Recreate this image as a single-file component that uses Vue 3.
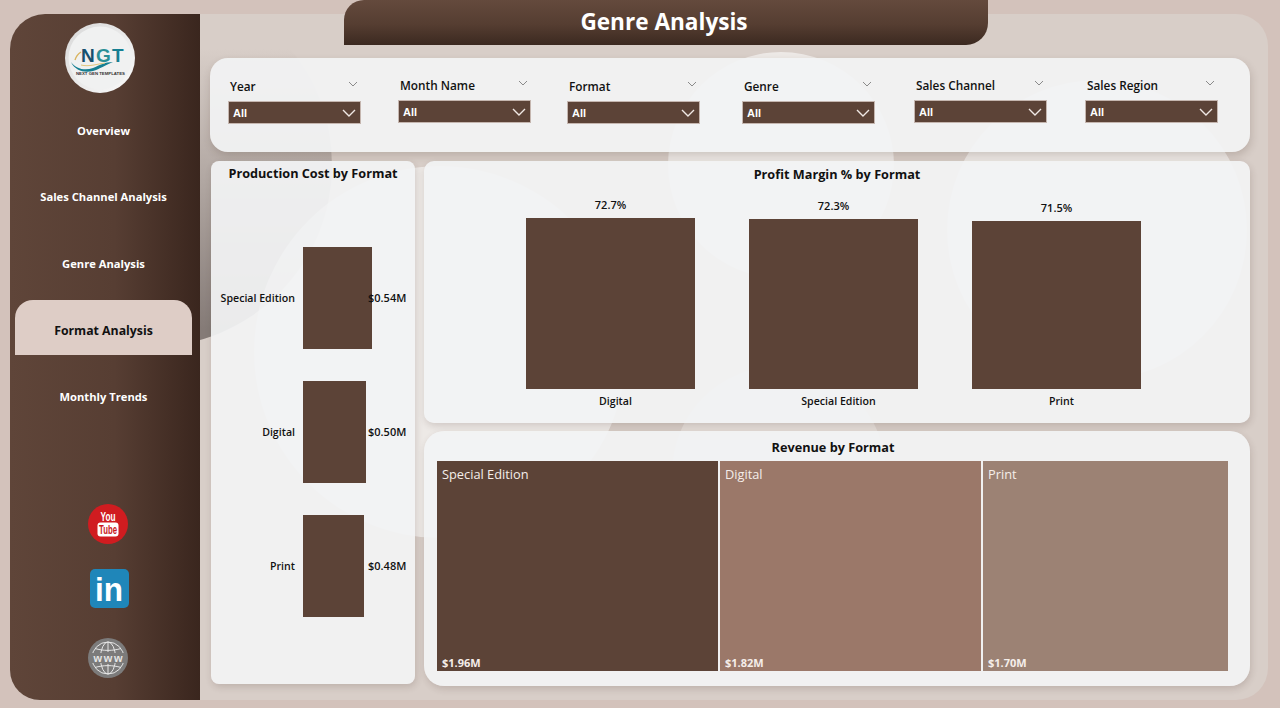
<template>
  <div class="page">
    <div class="panel">
      <!-- decorative circles sit behind the translucent cards -->
      <div class="circles">
        <div class="circle dark"></div>
        <div class="circle big"></div>
        <div class="circle top"></div>
        <div class="circle low"></div>
        <div class="circle right"></div>
      </div>

      <aside class="sidebar">
        <svg class="logo" viewBox="0 0 70 70" width="70" height="70">
          <defs>
            <linearGradient id="ring" x1="0" y1="0" x2="1" y2="1">
              <stop offset="0" stop-color="#d8d8d8" />
              <stop offset="1" stop-color="#fafafa" />
            </linearGradient>
          </defs>
          <circle cx="35" cy="35" r="35" fill="url(#ring)" />
          <circle cx="35" cy="35" r="31.5" fill="#f0f1f1" />
          <text x="16" y="39" class="logo-mark"><tspan fill="#17506e">N</tspan><tspan fill="#2a8f96">G</tspan><tspan fill="#167f92">T</tspan></text>
          <path d="M6 39 C11 46 20 48 28 45 C35 42 40 39 48 39 C40 42 35 46 28 48 C20 50 10 48 6 39 Z" fill="#157f92" />
          <path d="M10 37 C11 33 13 31 16 29" fill="none" stroke="#d9b45f" stroke-width="1.4" />
          <path d="M16 42 C24 44 32 41 40 40" fill="none" stroke="#e2c67d" stroke-width="1" />
          <text x="35.5" y="52" text-anchor="middle" textLength="49" lengthAdjust="spacingAndGlyphs" class="logo-sub">NEXT GEN TEMPLATES</text>
        </svg>

        <nav class="nav">
          <div v-for="item in navItems" :key="item" :class="['nav-item', { active: item === 'Format Analysis' }]">
            {{ item }}
          </div>
        </nav>

        <div class="socials">
          <svg class="youtube" viewBox="0 0 40 40" width="40" height="40">
            <circle cx="20" cy="20" r="20" fill="#d01c20" />
            <text x="20" y="17" text-anchor="middle" textLength="15" lengthAdjust="spacingAndGlyphs" class="yt-you">You</text>
            <rect x="9.5" y="18.5" width="21" height="14" rx="3" fill="#fff" />
            <text x="20" y="30" text-anchor="middle" textLength="18" lengthAdjust="spacingAndGlyphs" class="yt-tube">Tube</text>
          </svg>
          <svg class="linkedin" viewBox="0 0 39 39" width="39" height="39">
            <rect width="39" height="39" rx="5" fill="#1f86b9" />
            <text x="19" y="32" text-anchor="middle" textLength="28" lengthAdjust="spacingAndGlyphs" class="li-text">in</text>
          </svg>
          <svg class="www" viewBox="0 0 40 40" width="40" height="40">
            <circle cx="20" cy="20" r="20" fill="#7c7b7b" />
            <g fill="none" stroke="#e6e6e6" stroke-width="1">
              <circle cx="20" cy="20" r="16" />
              <ellipse cx="20" cy="20" rx="7.5" ry="16" />
              <path d="M20 4 V14 M20 26 V36 M7 10.5 C15 13 25 13 33 10.5 M7 29.5 C15 27 25 27 33 29.5" />
            </g>
            <rect x="2" y="15" width="36" height="10" fill="#7c7b7b" />
            <text x="20" y="24" text-anchor="middle" textLength="29" class="www-text">www</text>
          </svg>
        </div>
      </aside>

      <main class="content">
        <header class="title-tab">Genre Analysis</header>

        <section class="filters">
          <div
            v-for="s in slicers"
            :key="s.label"
            :class="['slicer', { raised: s.raised }]"
            :style="{ marginLeft: s.gap + 'px' }"
          >
            <div class="slicer-label">
              <span>{{ s.label }}</span>
              <svg viewBox="0 0 10 6" width="10" height="6"><path d="M1 1 L5 5 L9 1" fill="none" stroke="#8a8a8a" stroke-width="1" /></svg>
            </div>
            <div class="slicer-box">
              <span>All</span>
              <svg viewBox="0 0 14 8" width="14" height="8"><path d="M1 1 L7 7 L13 1" fill="none" stroke="#f0e8e4" stroke-width="1.4" /></svg>
            </div>
          </div>
        </section>

        <div class="charts">
          <section class="card cost">
            <h2>Production Cost by Format</h2>
            <div class="cost-rows">
              <div v-for="row in costRows" :key="row.name" class="cost-row">
                <span class="cost-name">{{ row.name }}</span>
                <div class="cost-track">
                  <div class="cost-bar" :style="{ width: row.width + 'px' }"></div>
                </div>
                <span class="cost-value">{{ row.value }}</span>
              </div>
            </div>
          </section>

          <div class="right-col">
            <section class="card margin">
              <h2>Profit Margin % by Format</h2>
              <div class="margin-plot">
                <div v-for="col in marginCols" :key="col.name" class="margin-col">
                  <span class="margin-value">{{ col.value }}</span>
                  <div class="margin-bar" :style="{ height: col.height + 'px' }"></div>
                  <span class="margin-name">{{ col.name }}</span>
                </div>
              </div>
            </section>

            <section class="card revenue">
              <h2>Revenue by Format</h2>
              <div class="treemap">
                <div
                  v-for="cell in revenueCells"
                  :key="cell.name"
                  class="cell"
                  :style="{ width: cell.width + 'px', background: cell.color }"
                >
                  <span class="cell-name">{{ cell.name }}</span>
                  <span class="cell-value">{{ cell.value }}</span>
                </div>
              </div>
            </section>
          </div>
        </div>
      </main>
    </div>
  </div>
</template>

<script setup>
const navItems = ['Overview', 'Sales Channel Analysis', 'Genre Analysis', 'Format Analysis', 'Monthly Trends']

const slicers = [
  { label: 'Year', gap: 0 },
  { label: 'Month Name', gap: 37, raised: true },
  { label: 'Format', gap: 36 },
  { label: 'Genre', gap: 42 },
  { label: 'Sales Channel', gap: 39, raised: true },
  { label: 'Sales Region', gap: 38, raised: true }
]

const costRows = [
  { name: 'Special Edition', value: '$0.54M', width: 69 },
  { name: 'Digital', value: '$0.50M', width: 63 },
  { name: 'Print', value: '$0.48M', width: 61 }
]

const marginCols = [
  { name: 'Digital', value: '72.7%', height: 171 },
  { name: 'Special Edition', value: '72.3%', height: 170 },
  { name: 'Print', value: '71.5%', height: 168 }
]

const revenueCells = [
  { name: 'Special Edition', value: '$1.96M', width: 281, color: '#5c4337' },
  { name: 'Digital', value: '$1.82M', width: 261, color: '#9b7869' },
  { name: 'Print', value: '$1.70M', width: 245, color: '#9c8274' }
]
</script>

<style>
body {
  background: #d3c2bb;
}
</style>

<style scoped>
.page {
  width: 1280px;
  height: 708px;
  box-sizing: border-box;
  padding: 14px 12px 8px 10px;
  overflow: hidden;
  font-family: "Open Sans", "Noto Sans", sans-serif;
  color: #111;
}

.panel {
  position: relative;
  display: flex;
  height: 686px;
  background: #d8cec8;
  border-radius: 35px 32px 32px 30px;
}

.circles {
  position: absolute;
  inset: 0;
  overflow: hidden;
  border-radius: inherit;
}

.circle {
  position: absolute;
  border-radius: 50%;
  background: rgba(255, 255, 255, 0.55);
}

.circle.dark {
  left: -42px;
  top: -31px;
  width: 364px;
  height: 364px;
  background: linear-gradient(to bottom, rgba(133, 123, 119, 0) 18%, #857b77 95%);
}

.circle.big {
  left: 244px;
  top: 152px;
  width: 372px;
  height: 372px;
}

.circle.top {
  left: 658px;
  top: 38px;
  width: 226px;
  height: 226px;
}

.circle.low {
  left: 662px;
  top: 352px;
  width: 214px;
  height: 214px;
  background: rgba(255, 255, 255, 0.3);
}

.circle.right {
  left: 937px;
  top: 66px;
  width: 300px;
  height: 300px;
}

/* sidebar */
.sidebar {
  position: relative;
  z-index: 2;
  width: 190px;
  flex-shrink: 0;
  display: flex;
  flex-direction: column;
  border-radius: 35px 0 0 30px;
  background: linear-gradient(to right, #5f4539 0%, #573e33 55%, #3a261e 100%);
}

.logo {
  display: block;
  margin: 9px 0 0 55px;
}

.logo-mark {
  font-family: "Liberation Sans", sans-serif;
  font-weight: 700;
  font-size: 19px;
  letter-spacing: 1.2px;
}

.logo-sub {
  font-family: "Liberation Sans", sans-serif;
  font-weight: 700;
  font-size: 4.4px;
  fill: #333;
}

.nav {
  display: flex;
  flex-direction: column;
  gap: 11.5px;
  margin: 7.5px 0 0 5px;
  width: 177px;
}

.nav-item {
  display: flex;
  align-items: center;
  justify-content: center;
  height: 55px;
  padding-top: 4px;
  box-sizing: border-box;
  color: #fff;
  font-size: 11.2px;
  font-weight: 700;
}

.nav-item.active {
  padding-top: 5px;
  background: #decdc6;
  border-radius: 18px 18px 0 0;
  color: #111;
  font-size: 12.3px;
}

.socials {
  display: flex;
  flex-direction: column;
  margin: 82px 0 0 78px;
}

.youtube,
.linkedin,
.www {
  display: block;
}

.linkedin {
  margin: 25px 0 0 2px;
}

.www {
  margin-top: 30px;
}

.yt-you {
  font-family: "Liberation Sans", sans-serif;
  font-weight: 700;
  font-size: 13px;
  fill: #fff;
}

.yt-tube {
  font-family: "Liberation Sans", sans-serif;
  font-weight: 700;
  font-size: 12px;
  fill: #c8181c;
}

.li-text {
  font-family: "Liberation Sans", sans-serif;
  font-weight: 700;
  font-size: 34px;
  fill: #fff;
}

.www-text {
  font-family: "Liberation Sans", sans-serif;
  font-weight: 700;
  font-size: 11px;
  fill: #e6e6e6;
}

/* main */
.content {
  position: relative;
  z-index: 1;
  flex: 1;
  min-width: 0;
  margin-top: -14px;
  padding: 0 18px 0 10px;
}

.title-tab {
  width: 644px;
  height: 45px;
  margin-left: 134px;
  display: flex;
  align-items: center;
  justify-content: center;
  padding: 0 4px 3px 0;
  box-sizing: border-box;
  border-radius: 20px 0 22px 0;
  background: linear-gradient(to bottom, #644a3d 0%, #553d31 55%, #3b2920 100%);
  color: #fff;
  font-size: 22.6px;
  font-weight: 700;
}

.filters {
  display: flex;
  height: 94px;
  box-sizing: border-box;
  margin-top: 13px;
  padding: 19px 0 0 18px;
  border-radius: 18px;
  background: rgba(242, 243, 244, 0.93);
  box-shadow: 1px 4px 8px rgba(60, 40, 30, 0.18);
}

.slicer {
  width: 133px;
}

.slicer.raised {
  margin-top: -1px;
}

.slicer-label {
  display: flex;
  align-items: center;
  justify-content: space-between;
  height: 17px;
  padding: 0 3px 0 2px;
  font-size: 11.8px;
  font-weight: 600;
}

.slicer-label svg {
  margin-top: -3px;
}

.slicer-box {
  display: flex;
  align-items: center;
  justify-content: space-between;
  height: 23px;
  margin-top: 7px;
  padding: 0 4px 0 4px;
  box-sizing: border-box;
  background: #5c4337;
  border: 1.5px solid #c5b6af;
  color: #fff;
  font-family: "Liberation Sans", sans-serif;
  font-size: 11px;
  font-weight: 700;
}

.charts {
  display: flex;
  align-items: flex-start;
  gap: 9px;
  margin: 9px 0 0 1px;
}

.card {
  background: rgba(242, 243, 244, 0.93);
  box-shadow: 1px 3px 7px rgba(60, 40, 30, 0.16);
}

.card h2 {
  margin: 0;
  text-align: center;
  font-size: 12.7px;
  font-weight: 700;
  line-height: 18px;
}

.cost {
  width: 204px;
  height: 523px;
  flex-shrink: 0;
  box-sizing: border-box;
  padding-top: 3px;
  border-radius: 8px;
}

.cost-rows {
  display: flex;
  flex-direction: column;
  gap: 32px;
  margin-top: 65px;
}

.cost-row {
  display: grid;
  grid-template-columns: 84px 65px auto;
  column-gap: 8px;
  align-items: center;
  height: 102px;
}

.cost-row > span {
  font-size: 11px;
  font-weight: 600;
}

.cost-row > .cost-name {
  font-size: 10.6px;
  text-align: right;
}

.cost-track {
  height: 102px;
}

.cost-bar {
  height: 102px;
  background: #5c4337;
}

.cost-value {
  position: relative;
  margin: -2px 0 0 -8px;
  white-space: nowrap;
}

.right-col {
  display: flex;
  flex-direction: column;
  gap: 8px;
  width: 826px;
}

.margin {
  height: 262px;
  box-sizing: border-box;
  padding-top: 4px;
  border-radius: 10px;
}

.margin-plot {
  display: grid;
  grid-template-columns: repeat(3, 169px);
  column-gap: 54px;
  margin: 4px 0 0 102px;
  height: 222px;
  align-items: end;
}

.margin-col {
  display: flex;
  flex-direction: column;
  align-items: center;
}

.margin-value {
  font-size: 11px;
  font-weight: 600;
  line-height: 15px;
  margin-bottom: 6px;
}

.margin-bar {
  width: 169px;
  background: #5c4337;
}

.margin-name {
  margin: 5px 0 0 10px;
  font-size: 10.6px;
  font-weight: 600;
  line-height: 15px;
}

.revenue {
  height: 255px;
  box-sizing: border-box;
  padding: 7px 0 0 13px;
  border-radius: 20px;
}

.revenue h2 {
  margin: 0 8px 0 -13px;
}

.treemap {
  display: flex;
  gap: 2px;
  height: 210px;
  margin-top: 5px;
}

.cell {
  display: flex;
  flex-direction: column;
  justify-content: space-between;
  padding: 4px 5px 1px;
  box-sizing: border-box;
  color: #f5eeea;
}

.cell-name {
  font-size: 12.8px;
  line-height: 19px;
}

.cell-value {
  font-size: 11px;
  font-weight: 700;
  line-height: 15px;
}
</style>
